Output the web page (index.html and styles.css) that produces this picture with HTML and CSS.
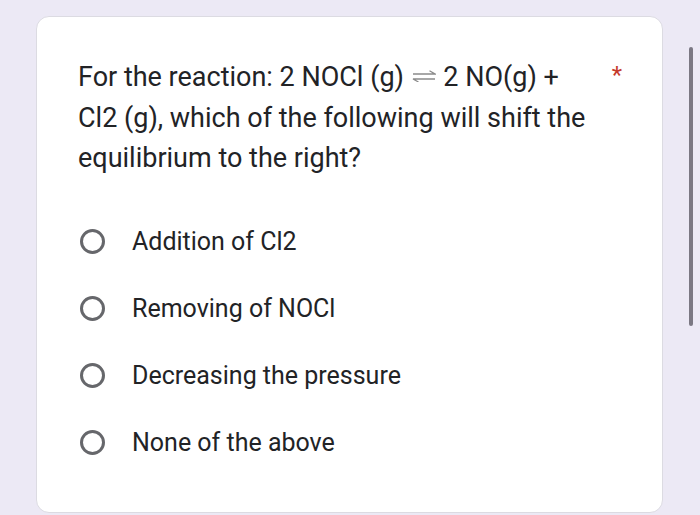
FILE: index.html
```html
<!DOCTYPE html>
<html>
<head>
<meta charset="utf-8">
<link rel="stylesheet" href="styles.css">
</head>
<body>
<div class="page">
  <div class="card">
    <div class="question">
      <div class="qtext">For the reaction: 2 NOCl (g) <svg class="eq" width="24" height="12" viewBox="0 0 24 12"><path d="M1 4H23L17.5 0.8M23 9H1L6.5 12" fill="none" stroke="#8a8a8a" stroke-width="1.3"/></svg> 2 NO(g) + Cl2 (g), which of the following will shift the equilibrium to the right?</div>
      <span class="req">*</span>
    </div>
    <div class="options">
      <div class="opt"><span class="radio"></span><span class="label">Addition of Cl2</span></div>
      <div class="opt"><span class="radio"></span><span class="label">Removing of NOCl</span></div>
      <div class="opt"><span class="radio"></span><span class="label">Decreasing the pressure</span></div>
      <div class="opt"><span class="radio"></span><span class="label">None of the above</span></div>
    </div>
  </div>
  <div class="scrollbar"></div>
</div>
</body>
</html>
```
FILE: styles.css
```css
html, body { margin: 0; padding: 0; }
body {
  background: #ece9f5;
  font-family: Roboto, "Liberation Sans", sans-serif;
  width: 700px;
  height: 515px;
  overflow: hidden;
}
.page {
  position: relative;
  padding: 16px 0 0 36px;
}
.card {
  width: 627px;
  height: 497px;
  box-sizing: border-box;
  background: #fff;
  border: 1px solid #dcdbe2;
  border-radius: 13px;
  padding: 40px 41px 0 41px;
}
.question {
  display: flex;
  align-items: flex-start;
  justify-content: space-between;
}
.qtext {
  width: 515px;
  font-size: 27px;
  line-height: 40.5px;
  color: #222326;
}
.eq { vertical-align: 4px; margin: 0 1px; }
.req {
  color: #c5392b;
  font-size: 24px;
  line-height: 36px;
  margin-right: -1px;
}
.options {
  margin-top: 43px;
  display: flex;
  flex-direction: column;
  gap: 27px;
}
.opt {
  display: flex;
  align-items: center;
  height: 40px;
}
.radio {
  width: 25px;
  height: 25px;
  box-sizing: border-box;
  border: 3px solid #66676b;
  border-radius: 50%;
  flex: none;
  margin-left: 2px;
  margin-right: 27px;
}
.label {
  font-size: 25px;
  color: #222326;
}
.scrollbar {
  position: absolute;
  left: 689px;
  top: 47px;
  width: 4px;
  height: 279px;
  background: #7b7883;
  border-radius: 2px;
}
```
